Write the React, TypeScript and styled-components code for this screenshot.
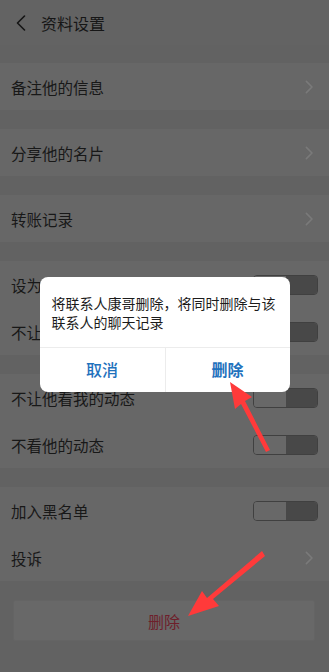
import React from 'react';
import styled, {createGlobalStyle} from 'styled-components';

type RowType = {
    label: string
    kind: 'link' | 'switch'
}

const groups: RowType[][] = [
    [{label: '备注他的信息', kind: 'link'}],
    [{label: '分享他的名片', kind: 'link'}],
    [{label: '转账记录', kind: 'link'}],
    [{label: '设为星标朋友', kind: 'switch'}, {label: '不让他看我的朋友圈', kind: 'switch'}],
    [{label: '不让他看我的动态', kind: 'switch'}, {label: '不看他的动态', kind: 'switch'}],
    [{label: '加入黑名单', kind: 'switch'}, {label: '投诉', kind: 'link'}],
]

const GlobalStyle = createGlobalStyle`
    html, body {
        margin: 0;
        padding: 0;
        background-color: #626262;
    }
    body {
        font-family: "Noto Sans CJK SC", "Noto Sans", sans-serif;
    }
`

const Chevron = ({color, size}: { color: string, size: number }) => (
    <svg width={size * 0.6} height={size} viewBox="0 0 6 10" fill="none">
        <path d="M1 1 L5 5 L1 9" stroke={color} strokeWidth="1.1" strokeLinecap="round" strokeLinejoin="round"/>
    </svg>
)

export default function App() {
    return (
        <StyledPage>
            <GlobalStyle/>
            <StyledHeader>
                <StyledBack>
                    <svg width="10" height="16" viewBox="0 0 10 16" fill="none">
                        <path d="M8.5 1 L1.5 8 L8.5 15" stroke="#151515" strokeWidth="1.6" strokeLinecap="round"
                              strokeLinejoin="round"/>
                    </svg>
                </StyledBack>
                <StyledTitle>资料设置</StyledTitle>
            </StyledHeader>

            <StyledList>
                {groups.map((group, i) => (
                    <StyledGroup key={i}>
                        {group.map(row => (
                            <StyledRow key={row.label}>
                                <StyledLabel>{row.label}</StyledLabel>
                                {row.kind === 'link'
                                    ? <Chevron color={'#7a7a7a'} size={14}/>
                                    : <StyledSwitch><span/><span/></StyledSwitch>}
                            </StyledRow>
                        ))}
                    </StyledGroup>
                ))}
                <StyledDelete>删除</StyledDelete>
            </StyledList>

            <StyledOverlay>
                <StyledDialog>
                    <StyledMessage>将联系人康哥删除，将同时删除与该联系人的聊天记录</StyledMessage>
                    <StyledActions>
                        <StyledAction>取消</StyledAction>
                        <StyledAction bold>删除</StyledAction>
                    </StyledActions>
                </StyledDialog>
            </StyledOverlay>

            <StyledArrows width="329" height="672" viewBox="0 0 329 672">
                {/* arrow to the dialog button */}
                <polygon points="266,452 270,450 245,401 252,397 230,382 235,409 241,404" fill="#ff3a3a"/>
                {/* arrow to the delete button */}
                <polygon points="262,551 265,556 213,599 219,606 188,616 202,591 207,598" fill="#ff3a3a"/>
            </StyledArrows>
        </StyledPage>
    )
}

const StyledPage = styled.div`
    position: relative;
    width: 329px;
    min-height: 672px;
    background-color: #626262;
    overflow: hidden;
`

const StyledHeader = styled.header`
    height: 45px;
    display: flex;
    align-items: center;
    padding: 0 0 0 16px;
    background-color: #636363;
`

const StyledBack = styled.span`
    display: flex;
    width: 10px;
    margin: 0 15px 0 0;
`

const StyledTitle = styled.h1`
    margin: 0;
    font-size: 16px;
    font-weight: 400;
    color: #161616;
`

const StyledList = styled.div`
    display: flex;
    flex-direction: column;
    gap: 19px;
    padding: 18px 0 0 0;
`

const StyledGroup = styled.section`
    display: flex;
    flex-direction: column;
    background-color: #676767;
`

const StyledRow = styled.div`
    height: 47px;
    display: flex;
    align-items: center;
    justify-content: space-between;
    padding: 0 11px 0 11px;
    box-sizing: border-box;

    svg {
        margin: 0 5px 0 0;
    }
`

const StyledLabel = styled.span`
    font-size: 15.5px;
    color: #181818;
`

const StyledSwitch = styled.span`
    display: flex;
    width: 65px;
    height: 20px;
    box-sizing: border-box;
    border: 1px solid #404040;
    border-radius: 4px;
    overflow: hidden;

    span {
        flex: 1;
        background-color: #686868;
    }

    span + span {
        background-color: #484848;
    }
`

const StyledDelete = styled.button`
    margin: 0 14px 0 13px;
    height: 41px;
    border: 1px solid #646464;
    border-radius: 2px;
    background-color: #686868;
    font-family: "Noto Sans CJK SC", sans-serif;
    font-size: 16px;
    color: #6e1f2b;
`

const StyledOverlay = styled.div`
    position: absolute;
    inset: 0;
    display: flex;
    align-items: center;
    justify-content: center;
`

const StyledDialog = styled.div`
    width: 250px;
    margin: -4px 0 0 0;
    background-color: #ffffff;
    border-radius: 8px;
    overflow: hidden;
`

const StyledMessage = styled.p`
    margin: 0;
    padding: 17px 12px 14px 12px;
    font-size: 14px;
    line-height: 19.5px;
    color: #1c1c1c;
`

const StyledActions = styled.div`
    display: grid;
    grid-template-columns: 1fr 1fr;
    height: 44px;
    border-top: 1px solid #ececec;
`

const StyledAction = styled.button<{ bold?: boolean }>`
    border: none;
    background: none;
    font-family: "Noto Sans CJK SC", sans-serif;
    font-size: 16px;
    font-weight: ${props => props.bold ? 700 : 500};
    color: #1f72bd;
    padding: 0 0 2px 0;

    & + & {
        border-left: 1px solid #ececec;
    }
`

const StyledArrows = styled.svg`
    position: absolute;
    top: 0;
    left: 0;
    pointer-events: none;
`
